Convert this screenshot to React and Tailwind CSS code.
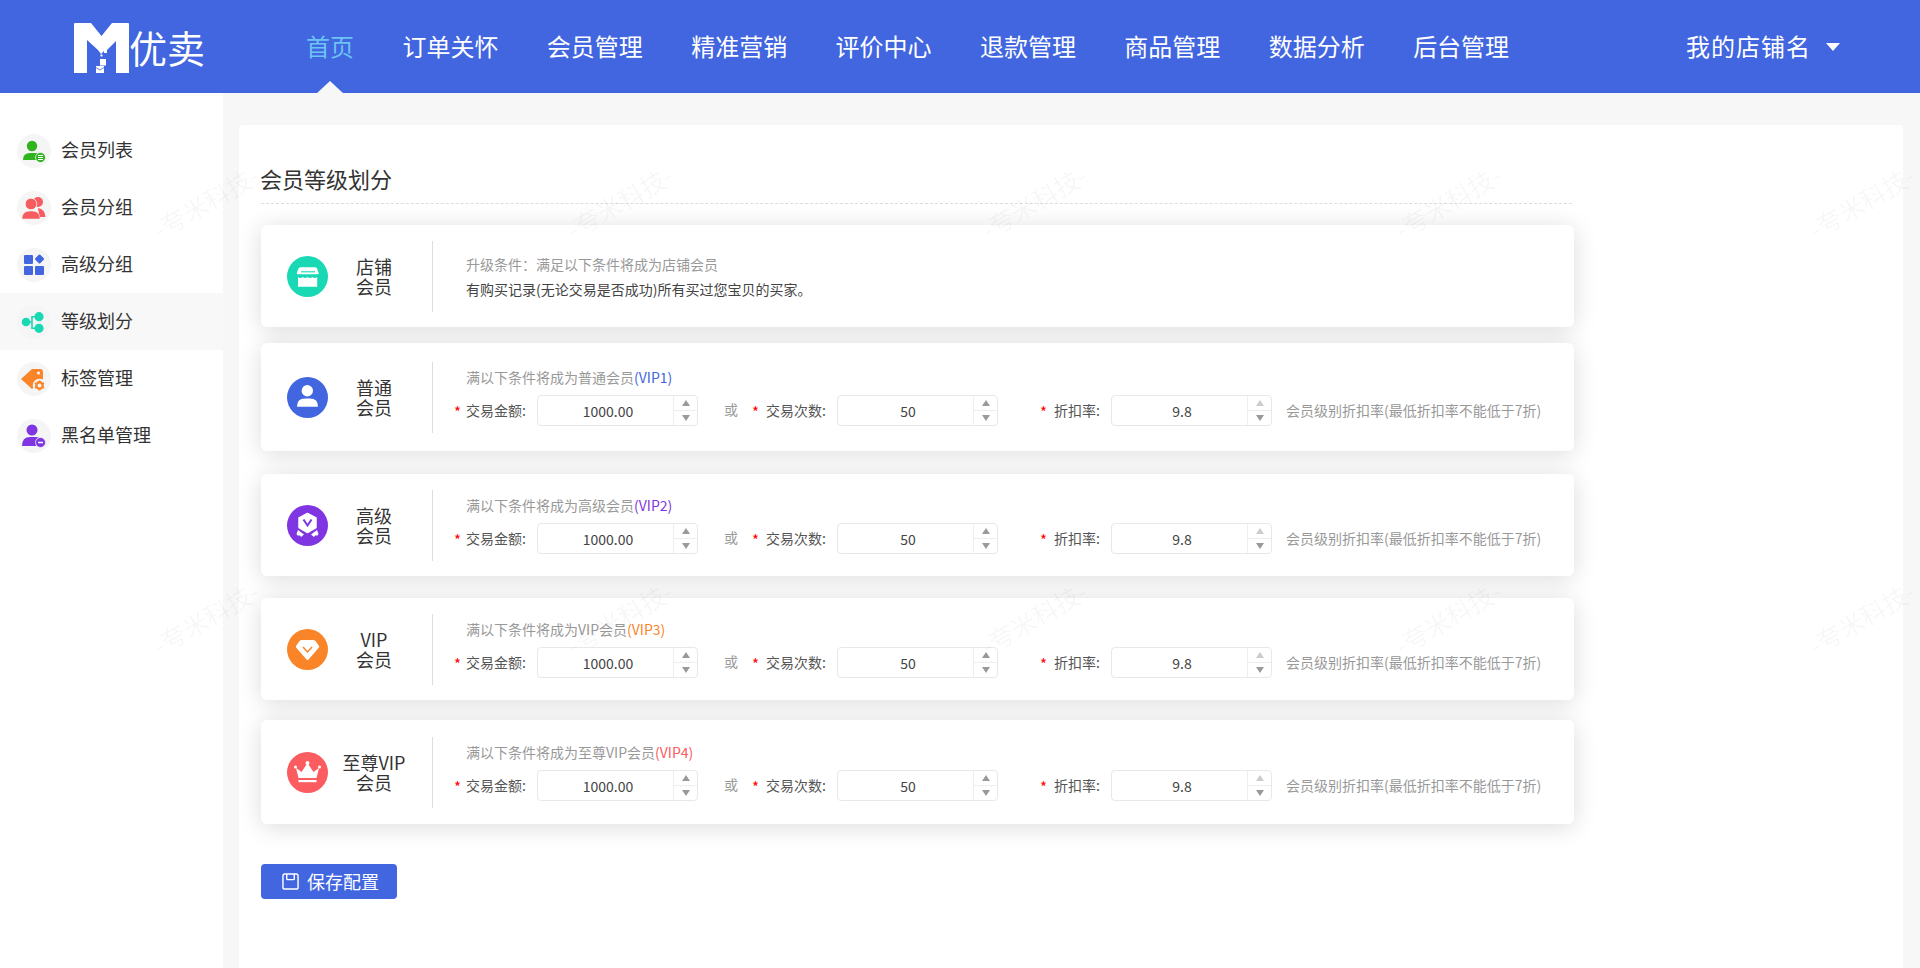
import React from "react";

const FONT = "font-['Noto_Sans_CJK_SC','Noto_Sans',sans-serif]";
const NAV = ["首页", "订单关怀", "会员管理", "精准营销", "评价中心", "退款管理", "商品管理", "数据分析", "后台管理"];

const Logo = () => (
  <div className="flex items-center">
    <svg width="55" height="50" viewBox="0 0 55 50" className="mt-[3px]">
      <path fill="#fff" d="M0 1Q0 0 1 0H17L27.5 13L38 0H54Q55 0 55 1V50H42V18L33 27V30H30V28L27 31L24 27L13 17V50H0Z" />
      <rect x="22" y="43" width="8" height="7" fill="#fff" />
      <path d="M22 44.5L26 47L30 44.5" stroke="#4166e0" strokeWidth="0.8" fill="none" />
      <rect x="26" y="36" width="6" height="6.5" fill="#fff" />
      <rect x="26.5" y="31.5" width="2" height="2" fill="#fff" />
    </svg>
    <span className="text-[38px] leading-[50px] text-white">优卖</span>
  </div>
);

const Header = () => (
  <header className="relative h-[93px] flex items-center bg-[#4166e0] text-white">
    <div className="w-[306px] pl-[74px] shrink-0"><Logo /></div>
    <nav className="flex gap-[48.4px] text-[24px] leading-[34px] -mt-[1px]">
      {NAV.map((n, i) => (
        <a key={n} className={i === 0 ? "relative text-[#6cc4f5]" : "text-white"}>
          {n}
          {i === 0 && (
            <span className="absolute left-1/2 -translate-x-1/2 top-[52px] w-0 h-0 border-x-[14px] border-x-transparent border-b-[13px] border-b-[#f7f7f7]" />
          )}
        </a>
      ))}
    </nav>
    <div className="ml-auto mr-[80px] flex items-center">
      <span className="text-[24px] leading-[34px] tracking-[1px] -mt-[1px]">我的店铺名</span>
      <span className="ml-[15px] w-0 h-0 border-x-[7.5px] border-x-transparent border-t-[8px] border-t-white" />
    </div>
  </header>
);

const SideIcon = ({ type }) => {
  const s = {
    list: (
      <>
        <circle cx="11" cy="8" r="5.2" fill="#2fb31f" />
        <path d="M2 22q0-7 7-7h6q3 0 4 2q-3 1-3 5z" fill="#2fb31f" />
        <circle cx="19.5" cy="19.5" r="5" fill="#2fb31f" stroke="#f5f5f5" strokeWidth="0.8" />
        <path d="M17 17.5h5M17 19.5h5M17 21.5h5" stroke="#fff" strokeWidth="1" />
      </>
    ),
    group: (
      <>
        <circle cx="17" cy="7" r="5" fill="#f65b5f" />
        <path d="M17 13q7 1 7.5 9h-6z" fill="#f65b5f" />
        <circle cx="10" cy="9" r="5.8" fill="#f65b5f" stroke="#f5f5f5" strokeWidth="0.8" />
        <path d="M1 24q0-8 8-8h2q8 0 8 8z" fill="#f65b5f" stroke="#f5f5f5" strokeWidth="0.5" />
      </>
    ),
    grid: (
      <>
        <rect x="3" y="3" width="9" height="9" rx="1" fill="#4166e0" />
        <rect x="3" y="14" width="9" height="9" rx="1" fill="#4166e0" />
        <rect x="14" y="14" width="9" height="9" rx="1" fill="#4166e0" />
        <rect x="15" y="3.5" width="7" height="7" rx="1" transform="rotate(45 18.5 7)" fill="#4166e0" />
      </>
    ),
    nodes: (
      <>
        <path d="M5 13H11V7.700H18M11 13V19.300H18" stroke="#19d8b4" strokeWidth="1.6" fill="none" />
        <circle cx="5" cy="13" r="4.3" fill="#19d8b4" />
        <circle cx="18" cy="7.7" r="4.6" fill="#19d8b4" />
        <circle cx="18" cy="19.3" r="4.6" fill="#19d8b4" />
      </>
    ),
    tag: (
      <>
        <path d="M0 13L11 3h8q3 0 3 3v7L11 23z" fill="#fa8529" />
        <circle cx="17.5" cy="7" r="1.6" fill="#f5f5f5" />
        <circle cx="18.5" cy="19.5" r="6.8" fill="#f5f5f5" />
        <circle cx="18.5" cy="19.5" r="3.2" fill="none" stroke="#fa8529" strokeWidth="2.4" />
        <path d="M18.5 14.5v2M18.5 22.5v2M14 17l1.8 1M21.2 21l1.8 1M14 22l1.8-1M21.2 18l1.8-1" stroke="#fa8529" strokeWidth="1.8" />
      </>
    ),
    minus: (
      <>
        <circle cx="11" cy="7" r="5.5" fill="#7f35e1" />
        <path d="M1 23q0-9 8-9h6q3 0 4 2q-4 1.5-4 7z" fill="#7f35e1" />
        <circle cx="19.5" cy="19.5" r="5" fill="#7f35e1" stroke="#f5f5f5" strokeWidth="0.8" />
        <path d="M17 19.5h5" stroke="#fff" strokeWidth="1.5" />
      </>
    ),
  };
  return (
    <span className="flex items-center justify-center w-[34px] h-[34px] rounded-full bg-[#f5f5f5] shrink-0">
      <svg width="26" height="26" viewBox="0 0 26 26">{s[type]}</svg>
    </span>
  );
};

const SIDE = [
  ["list", "会员列表"],
  ["group", "会员分组"],
  ["grid", "高级分组"],
  ["nodes", "等级划分"],
  ["tag", "标签管理"],
  ["minus", "黑名单管理"],
];

const Sidebar = () => (
  <aside className="w-[223px] shrink-0 bg-white pt-[29px]">
    {SIDE.map(([t, label], i) => (
      <div key={t} className={`h-[57px] pl-[17px] flex items-center gap-[10px] text-[18px] text-[#333] ${i === 3 ? "bg-[#f8f8f8]" : ""}`}>
        <SideIcon type={t} />
        <span className="-mt-[2px]">{label}</span>
      </div>
    ))}
  </aside>
);

const LevelIcon = ({ type, color }) => {
  const d = {
    shop: (
      <>
        <path d="M8.5 6.3H23q1.500 0 2 1.300L26.700 12q.3 1-.7 1.300H5.500q-1-.3-.7-1.300L6.500 7.600q.5-1.300 2-1.300z" fill="#fff" />
        <path d="M9 10.800H23" stroke="#19d8b4" strokeWidth="1.100" />
        <path d="M6 16q2.400 2.200 4.800 0q2.400 2.200 4.800 0q2.400 2.200 4.800 0q2.400 2.200 4.800 0V25.700H6z" fill="#fff" />
      </>
    ),
    user: (
      <>
        <circle cx="15.3" cy="8.7" r="5.7" fill="#fff" />
        <path d="M5 24.700q0-8.300 8-8.300h5q8 0 8 8.300z" fill="#fff" />
      </>
    ),
    badge: (
      <>
        <path d="M15.500 3.500L24 8v9.500l-8.500 5L7 17.500V8z" fill="#fff" stroke="#fff" strokeWidth="1.500" strokeLinejoin="round" />
        <path d="M11.500 9.500l4 6l4-6" stroke="#7f35e1" strokeWidth="2" fill="none" />
        <path d="M6 20l6 4.500l-3 2.500l-1-1.500l-2.500 0l-1-1.500zM25 20l-6 4.500l3 2.500l1-1.500l2.500 0l1-1.500z" fill="#fff" />
      </>
    ),
    gem: (
      <>
        <path d="M10 6h11q1.500 0 2.500 1l3.500 5q.5 1-.5 2L16.500 25.500q-1 1-2 0L4.500 14q-1-1-.5-2L7.500 7q1-1 2.500-1z" fill="#fff" />
        <path d="M11 13l4.500 5l4.500-5" stroke="#fa8529" strokeWidth="1.500" fill="none" />
      </>
    ),
    crown: (
      <>
        <path d="M4 11l5.500 4L15.500 6l6 9L27 11l-2.500 10h-18z" fill="#fff" />
        <circle cx="15.500" cy="6" r="2" fill="#fff" />
        <circle cx="3.500" cy="10" r="1.500" fill="#fff" />
        <circle cx="27.500" cy="10" r="1.500" fill="#fff" />
        <rect x="6.500" y="23" width="18" height="2.200" fill="#fff" />
      </>
    ),
  };
  return (
    <span className="flex items-center justify-center w-[41px] h-[41px] rounded-full shrink-0" style={{ backgroundColor: color }}>
      <svg width="31" height="31" viewBox="0 0 31 31">{d[type]}</svg>
    </span>
  );
};

const Arrow = ({ down, light }) => (
  <span
    className={`w-0 h-0 border-x-[4px] border-x-transparent ${down ? "border-t-[6px]" : "border-b-[6px]"} ${
      light ? (down ? "border-t-[#ccc]" : "border-b-[#ccc]") : down ? "border-t-[#999]" : "border-b-[#999]"
    }`}
  />
);

const NumberBox = ({ value, topLight }) => (
  <div className="w-[161px] h-[31px] flex rounded-[4px] border border-[#e8e8e8] bg-white shrink-0">
    <div className="flex-1 text-center leading-[31px] pl-[5px] text-[14px] text-[#444]">{value}</div>
    <div className="w-[24px] border-l border-[#eeeeee] flex flex-col">
      <div className="flex-1 flex items-center justify-center border-b border-[#eeeeee]"><Arrow light={topLight} /></div>
      <div className="flex-1 flex items-center justify-center"><Arrow down /></div>
    </div>
  </div>
);

const Field = ({ label, value, labelW, topLight, starW }) => (
  <>
    <span className="text-[#f00] text-[15px] leading-[14px] mt-[3px] -ml-[1px] shrink-0" style={{ width: starW + 1 }}>*</span>
    <span className="text-[14px] text-[#555] shrink-0" style={{ width: labelW }}>{label}</span>
    <NumberBox value={value} topLight={topLight} />
  </>
);

const FormRow = () => (
  <div className="flex items-center h-[31px] -ml-[11px] mt-[2px]">
    <Field label="交易金额:" value="1000.00" labelW={71} starW={11} />
    <span className="ml-[26px] w-[14px] text-[14px] text-[#999] -mt-[2px] shrink-0">或</span>
    <span className="w-[15px] shrink-0" />
    <Field label="交易次数:" value="50" labelW={71} starW={13} />
    <span className="w-[43px] shrink-0" />
    <Field label="折扣率:" value="9.8" labelW={57} starW={13} topLight />
    <span className="ml-[14px] text-[14px] text-[#999] whitespace-nowrap">会员级别折扣率(最低折扣率不能低于7折)</span>
  </div>
);

const Card = ({ icon, color, name, h, mt, name2 = "会员", children }) => (
  <section
    className="w-[1313px] flex items-center pl-[26px] bg-white rounded-[6px] shadow-[0_3px_24px_rgba(0,0,0,0.14)]"
    style={{ height: h, marginTop: mt }}
  >
    <LevelIcon type={icon} color={color} />
    <div className="w-[92px] -mt-[1px] text-center text-[18px] leading-[20px] text-[#333]">
      <div className="whitespace-nowrap">{name}</div>
      <div>{name2}</div>
    </div>
    <div className="ml-[12px] w-[1px] h-[71px] bg-[#dddddd]" />
    <div className="pl-[33px] h-[71px] -mt-[1px]">{children}</div>
  </section>
);

const Vip = ({ title, tag, color }) => (
  <>
    <div className="text-[14px] leading-[32px] text-[#999]">
      满以下条件将成为{title}
      <span style={{ color }}>{tag}</span>
    </div>
    <FormRow />
  </>
);

const Watermark = () => (
  <div className="absolute left-[-1px] top-[-6px] grid grid-cols-[repeat(5,414px)] auto-rows-[416px] pointer-events-none z-10">
    {Array.from({ length: 10 }).map((_, i) => (
      <div key={i} className="flex items-center justify-center">
        <span className="-rotate-30 text-[25px] text-[rgba(0,0,0,0.045)] whitespace-nowrap">-夸米科技-</span>
      </div>
    ))}
  </div>
);

const SaveIcon = () => (
  <svg width="17" height="17" viewBox="0 0 18 18" fill="none" stroke="#fff" strokeWidth="1.5">
    <path d="M3 1h12q2 0 2 2v12q0 2-2 2H3q-2 0-2-2V3q0-2 2-2z" />
    <path d="M5 1v5q0 1 1 1h6q1 0 1-1V1" />
  </svg>
);

export default function App() {
  return (
    <div className={`relative h-[968px] overflow-hidden flex flex-col bg-[#f7f7f7] ${FONT}`}>
      <Header />
      <div className="flex flex-1 min-h-0">
        <Sidebar />
        <main className="flex-1 min-w-0 pt-[32px] pl-[16px] pr-[17px]">
          <div className="h-full overflow-hidden rounded-t-[4px] bg-white pl-[22px] pt-[38px]">
            <h1 className="w-[1311px] h-[41px] text-[22px] leading-[30px] font-normal text-[#333] border-b border-dashed border-[#dcdcdc]">
              <span className="block -ml-[1px]">会员等级划分</span>
            </h1>
            <div className="pt-[21px] pb-[40px] overflow-visible -ml-[22px] pl-[22px]">
              <Card icon="shop" color="#19d8b4" name="店铺" h={102} mt={0}>
                <div className="pt-[12px] text-[14px] leading-[25px]">
                  <div className="text-[#999]">升级条件：满足以下条件将成为店铺会员</div>
                  <div className="text-[#444]">有购买记录(无论交易是否成功)所有买过您宝贝的买家。</div>
                </div>
              </Card>
              <Card icon="user" color="#4166e0" name="普通" h={108} mt={16}>
                <Vip title="普通会员" tag="(VIP1)" color="#4166e0" />
              </Card>
              <Card icon="badge" color="#7f35e1" name="高级" h={102} mt={23}>
                <Vip title="高级会员" tag="(VIP2)" color="#7f35e1" />
              </Card>
              <Card icon="gem" color="#fa8529" name="VIP" h={102} mt={22}>
                <Vip title="VIP会员" tag="(VIP3)" color="#fa8529" />
              </Card>
              <Card icon="crown" color="#fb5c5f" name="至尊VIP" h={104} mt={20}>
                <Vip title="至尊VIP会员" tag="(VIP4)" color="#fb5c5f" />
              </Card>
              <button className="mt-[40px] w-[136px] h-[35px] flex items-center pl-[21px] gap-[8px] rounded-[4px] bg-[#4166e0] text-white text-[18px] leading-[35px]">
                <SaveIcon />
                <span>保存配置</span>
              </button>
            </div>
          </div>
        </main>
      </div>
      <Watermark />
    </div>
  );
}
